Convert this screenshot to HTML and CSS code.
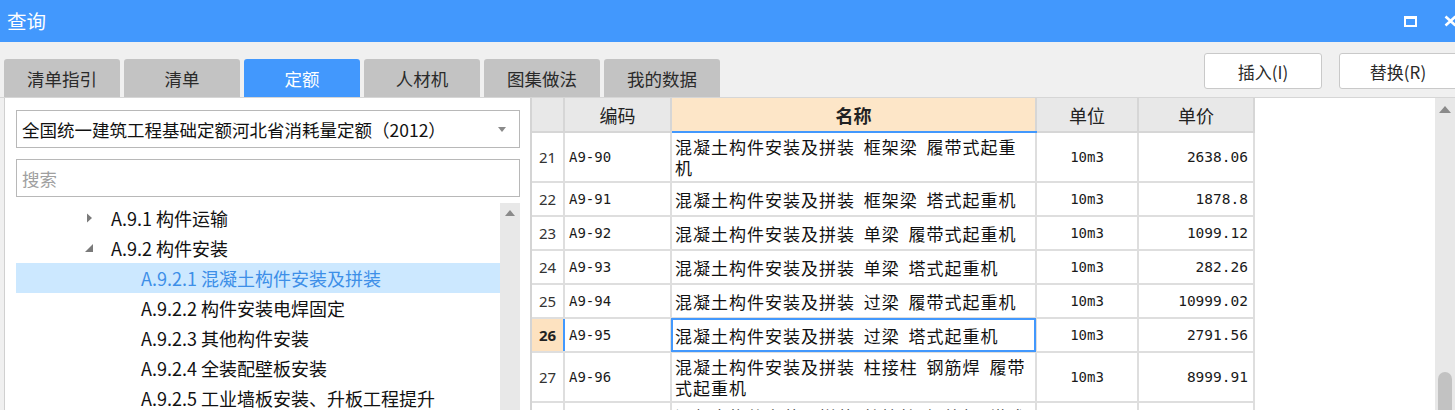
FILE: index.html
```html
<!DOCTYPE html>
<html lang="zh">
<head>
<meta charset="utf-8">
<title>查询</title>
<link rel="stylesheet" href="styles.css">
</head>
<body>
<div class="window">
  <div class="titlebar">
    <span class="title">查询</span>
    <div class="win-btns">
      <span class="max-icon"></span>
      <svg class="close-icon" width="13" height="12" viewBox="0 0 13 12"><path d="M1.5 1.5 L11.5 10.5 M11.5 1.5 L1.5 10.5" stroke="#fff" stroke-width="2.6" fill="none"/></svg>
    </div>
  </div>
  <div class="toolbar">
    <div class="tabs">
      <div class="tab">清单指引</div>
      <div class="tab">清单</div>
      <div class="tab active">定额</div>
      <div class="tab">人材机</div>
      <div class="tab">图集做法</div>
      <div class="tab">我的数据</div>
    </div>
    <div class="actions">
      <button class="btn">插入(I)</button>
      <button class="btn wide">替换(R)</button>
    </div>
  </div>
  <div class="main">
    <div class="left">
      <div class="select">
        <span class="select-text">全国统一建筑工程基础定额河北省消耗量定额（2012）</span>
        <svg class="caret" width="8" height="5" viewBox="0 0 8 5"><path d="M0 0 H8 L4 5 Z" fill="#8a8a8a"/></svg>
      </div>
      <div class="search">搜索</div>
      <div class="tree-wrap">
        <div class="tree">
          <div class="node lvl1">
            <svg class="arrow" width="10" height="10" viewBox="0 0 10 10"><path d="M3 0.5 L8 5 L3 9.5 Z" fill="#7a7a7a"/></svg>
            <span>A.9.1 构件运输</span>
          </div>
          <div class="node lvl1">
            <svg class="arrow" width="10" height="10" viewBox="0 0 10 10"><path d="M9 1 L9 9 L1 9 Z" fill="#7a7a7a"/></svg>
            <span>A.9.2 构件安装</span>
          </div>
          <div class="node lvl2 selected"><span>A.9.2.1 混凝土构件安装及拼装</span></div>
          <div class="node lvl2"><span>A.9.2.2 构件安装电焊固定</span></div>
          <div class="node lvl2"><span>A.9.2.3 其他构件安装</span></div>
          <div class="node lvl2"><span>A.9.2.4 全装配壁板安装</span></div>
          <div class="node lvl2"><span>A.9.2.5 工业墙板安装、升板工程提升</span></div>
        </div>
        <div class="vscroll tree-scroll">
          <svg class="up" width="10" height="6" viewBox="0 0 10 6"><path d="M0 6 L5 0 L10 6 Z" fill="#8a8a8a"/></svg>
        </div>
      </div>
    </div>
    <div class="grid-pane">
      <table class="grid">
        <colgroup>
          <col class="c-no"><col class="c-code"><col class="c-name"><col class="c-unit"><col class="c-price">
        </colgroup>
        <thead>
          <tr>
            <th></th>
            <th>编码</th>
            <th class="cur-col">名称</th>
            <th>单位</th>
            <th>单价</th>
          </tr>
        </thead>
        <tbody>
          <tr class="tall"><td class="no">21</td><td class="code">A9-90</td><td class="name">混凝土构件安装及拼装 框架梁 履带式起重机</td><td class="unit">10m3</td><td class="price">2638.06</td></tr>
          <tr><td class="no">22</td><td class="code">A9-91</td><td class="name">混凝土构件安装及拼装 框架梁 塔式起重机</td><td class="unit">10m3</td><td class="price">1878.8</td></tr>
          <tr><td class="no">23</td><td class="code">A9-92</td><td class="name">混凝土构件安装及拼装 单梁 履带式起重机</td><td class="unit">10m3</td><td class="price">1099.12</td></tr>
          <tr><td class="no">24</td><td class="code">A9-93</td><td class="name">混凝土构件安装及拼装 单梁 塔式起重机</td><td class="unit">10m3</td><td class="price">282.26</td></tr>
          <tr><td class="no">25</td><td class="code">A9-94</td><td class="name">混凝土构件安装及拼装 过梁 履带式起重机</td><td class="unit">10m3</td><td class="price">10999.02</td></tr>
          <tr class="cur-row"><td class="no">26</td><td class="code">A9-95</td><td class="name cur-cell">混凝土构件安装及拼装 过梁 塔式起重机</td><td class="unit">10m3</td><td class="price">2791.56</td></tr>
          <tr class="tall"><td class="no">27</td><td class="code">A9-96</td><td class="name">混凝土构件安装及拼装 柱接柱 钢筋焊 履带式起重机</td><td class="unit">10m3</td><td class="price">8999.91</td></tr>
          <tr class="tall"><td class="no">28</td><td class="code">A9-97</td><td class="name">混凝土构件安装及拼装 柱接柱 钢筋焊 塔式起重机</td><td class="unit">10m3</td><td class="price">8540.36</td></tr>
        </tbody>
      </table>
      <div class="grid-fill"></div>
      <div class="vscroll grid-scroll">
        <svg class="up" width="12" height="7" viewBox="0 0 12 7"><path d="M0 7 L6 0 L12 7 Z" fill="#8a8a8a"/></svg>
        <div class="thumb"></div>
      </div>
    </div>
  </div>
</div>
</body>
</html>
```
FILE: styles.css
```css
* { box-sizing: border-box; }
html, body { margin: 0; padding: 0; }
body {
  width: 1455px;
  height: 410px;
  overflow: hidden;
  background: #f0f0f0;
  font-family: "Noto Sans CJK SC", "Noto Sans", sans-serif;
  color: #222;
}
.window { width: 1455px; height: 410px; display: flex; flex-direction: column; }

/* title bar */
.titlebar {
  height: 42px;
  flex: none;
  background: #4298fd;
  display: flex;
  align-items: center;
  padding-left: 7px;
  color: #fff;
}
.title { flex: 1; font-size: 19.5px; line-height: 1; }
.win-btns { display: flex; align-items: center; gap: 27px; margin-right: -2px; }
.max-icon {
  width: 13px; height: 11px;
  border: 2px solid #fff;
  border-top-width: 3px;
}
.close-icon { display: block; }

/* toolbar */
.toolbar {
  height: 55px;
  flex: none;
  display: flex;
  align-items: flex-end;
  padding-left: 4px;
}
.tabs { display: flex; gap: 4px; }
.tab {
  width: 116px;
  height: 38px;
  background: #c3c3c3;
  border-radius: 3px 3px 0 0;
  display: flex;
  align-items: center;
  justify-content: center;
  font-size: 17.5px;
  color: #2a2a2a;
}
.tab.active { background: #4298fd; color: #fff; }
.actions {
  margin-left: auto;
  align-self: flex-start;
  margin-top: 11px;
  display: flex;
  gap: 17px;
  margin-right: -10px;
}
.btn {
  width: 118px;
  height: 36px;
  background: #fff;
  border: 1px solid #c9c9c9;
  border-radius: 3px;
  font-family: "Noto Sans CJK SC", "Noto Sans", sans-serif;
  font-size: 17px;
  color: #2a2a2a;
  padding: 0;
}
.btn.wide { width: 126px; padding-right: 8px; }

/* main */
.main {
  flex: 1;
  display: flex;
  border-top: 1px solid #d6d6d6;
  min-height: 0;
}
.left {
  width: 526px;
  margin-left: 4px;
  background: #fff;
  border-left: 1px solid #d0d0d0;
  padding: 12px 10px 0 11px;
  display: flex;
  flex-direction: column;
}
.select {
  height: 38px;
  border: 1px solid #b8b8b8;
  display: flex;
  align-items: center;
  padding: 0 13px 0 5px;
  font-size: 17.5px;
  color: #111;
}
.select-text { flex: 1; white-space: nowrap; }
.caret { display: block; }
.search {
  margin-top: 11px;
  height: 38px;
  border: 1px solid #b8b8b8;
  display: flex;
  align-items: center;
  padding-left: 5px;
  font-size: 17.5px;
  color: #a0a0a0;
}
.tree-wrap { margin-top: 6px; flex: 1; display: flex; min-height: 0; }
.tree { flex: 1; }
.node {
  height: 30px;
  display: flex;
  align-items: center;
  font-size: 18px;
  color: #111;
  white-space: nowrap;
}
.node.lvl1 { padding-left: 68px; }
.node.lvl1 .arrow { margin-right: 17px; display: block; }
.node.lvl2 { padding-left: 125px; }
.node.selected { background: #cce8ff; color: #3d8fe8; }

.vscroll {
  background: #e8e8e8;
  display: flex;
  flex-direction: column;
  align-items: center;
}
.tree-scroll { width: 20px; padding-top: 7px; }
.up { display: block; }

/* grid */
.grid-pane {
  flex: 1;
  display: flex;
  background: #fff;
  border-left: 2px solid #d4d4d4;
  min-width: 0;
}
.grid {
  border-collapse: collapse;
  table-layout: fixed;
  width: 722px;
  flex: none;
  align-self: flex-start;
}
.c-no { width: 32px; }
.c-code { width: 107px; }
.c-name { width: 365px; }
.c-unit { width: 102px; }
.c-price { width: 116px; }
.grid th, .grid td {
  border: 2px solid #dedede;
  padding: 0;
}
.grid th {
  height: 34px;
  background: #e8e8e8;
  font-weight: normal;
  font-size: 18px;
  color: #222;
  border-color: #d6d6d6;
  border-top: none;
}
.grid th:first-child { border-left: none; }
.grid th.cur-col {
  background: #fde6c8;
  font-weight: bold;
  border-bottom: 2px solid #4298fd;
}
.grid td:first-child { border-left: none; }
.grid tr { height: 34px; }
.grid tr.tall { height: 48px; }
.grid td { vertical-align: middle; }
.no {
  text-align: center;
  font-family: "Noto Sans", "Liberation Sans", sans-serif;
  font-size: 15px;
  color: #333;
}
.code {
  padding-left: 4px !important;
  font-family: "DejaVu Sans Mono", monospace;
  font-size: 14px;
  color: #1a1a1a;
}
.name {
  padding: 3px 5px 3px 3px !important;
  font-size: 17px;
  letter-spacing: 1px;
  word-spacing: 4px;
  line-height: 21px;
  color: #111;
}
.unit {
  text-align: center;
  font-family: "DejaVu Sans Mono", monospace;
  font-size: 14px;
  color: #1a1a1a;
}
.price {
  text-align: right;
  padding-right: 5px !important;
  font-family: "DejaVu Sans Mono", monospace;
  font-size: 14.5px;
  color: #1a1a1a;
}
.cur-row .no {
  background: #fde2c0;
  font-weight: bold;
  color: #222;
  border-right-color: #4298fd;
}
.cur-cell {
  outline: 2px solid #4298fd;
  outline-offset: -2px;
}
.grid-fill { flex: 1; }
.grid-scroll { width: 20px; padding-top: 8px; }
.thumb {
  margin-top: auto;
  margin-bottom: -12px;
  width: 14px;
  height: 50px;
  border-radius: 7px;
  background: #c2c2c2;
}
```
